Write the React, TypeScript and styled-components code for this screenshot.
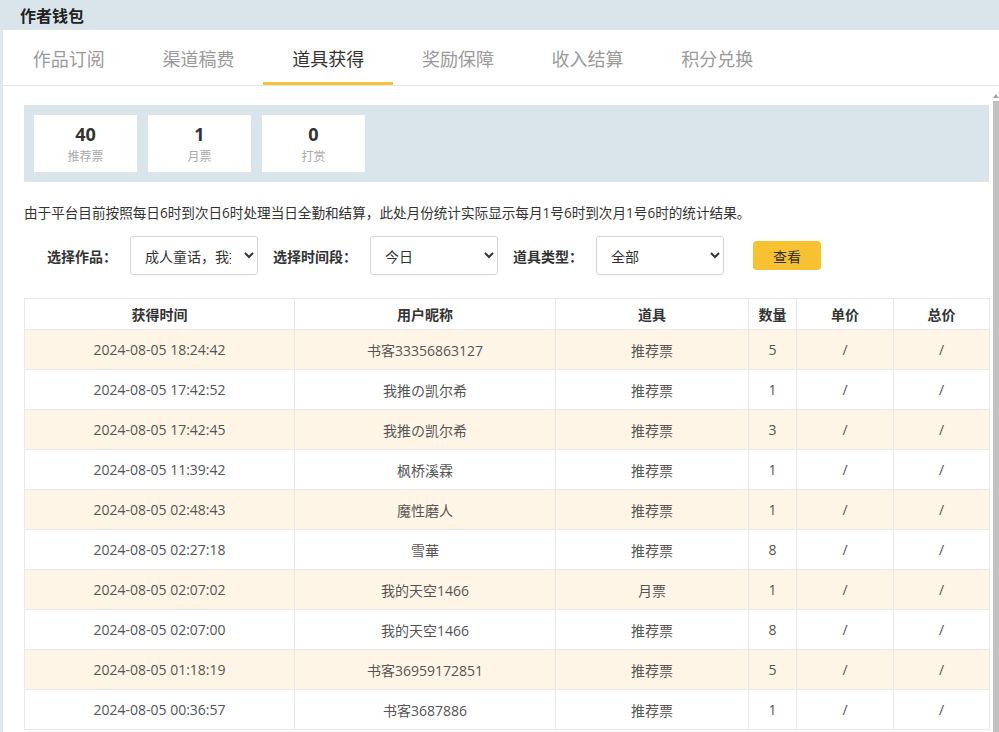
import React from 'react'
import styled, { createGlobalStyle } from 'styled-components'

const GlobalStyle = createGlobalStyle`
  html, body {
    margin: 0;
    padding: 0;
    overflow: hidden;
    background: #fff;
  }
  body {
    font-family: "Open Sans", "Noto Sans CJK SC", sans-serif;
    color: #333;
  }
`

const tabs = ['作品订阅', '渠道稿费', '道具获得', '奖励保障', '收入结算', '积分兑换']

const stats = [
  { value: '40', label: '推荐票' },
  { value: '1', label: '月票' },
  { value: '0', label: '打赏' },
]

const rows = [
  ['2024-08-05 18:24:42', '书客33356863127', '推荐票', '5'],
  ['2024-08-05 17:42:52', '我推の凯尔希', '推荐票', '1'],
  ['2024-08-05 17:42:45', '我推の凯尔希', '推荐票', '3'],
  ['2024-08-05 11:39:42', '枫桥溪霖', '推荐票', '1'],
  ['2024-08-05 02:48:43', '魔性磨人', '推荐票', '1'],
  ['2024-08-05 02:27:18', '雪華', '推荐票', '8'],
  ['2024-08-05 02:07:02', '我的天空1466', '月票', '1'],
  ['2024-08-05 02:07:00', '我的天空1466', '推荐票', '8'],
  ['2024-08-05 01:18:19', '书客36959172851', '推荐票', '5'],
  ['2024-08-05 00:36:57', '书客3687886', '推荐票', '1'],
]

const columns = [
  { title: '获得时间', width: 270 },
  { title: '用户昵称', width: 261 },
  { title: '道具', width: 193 },
  { title: '数量', width: 48 },
  { title: '单价', width: 97 },
  { title: '总价', width: 96 },
]

const App = () => {
  return (
    <>
      <GlobalStyle />
      <Page>
        <TopBar>作者钱包</TopBar>
        <Body>
          <TabBar>
            {tabs.map((t, i) => (
              <Tab key={t} active={i === 2}>{t}</Tab>
            ))}
          </TabBar>
          <Viewport>
            <Content>
              <StatsBox>
                {stats.map(s => (
                  <StatCard key={s.label}>
                    <StatValue>{s.value}</StatValue>
                    <StatLabel>{s.label}</StatLabel>
                  </StatCard>
                ))}
              </StatsBox>
              <Notice>由于平台目前按照每日6时到次日6时处理当日全勤和结算，此处月份统计实际显示每月1号6时到次月1号6时的统计结果。</Notice>
              <FilterRow>
                <FilterLabel first>选择作品：</FilterLabel>
                <Select defaultValue="a">
                  <option value="a">成人童话，我推的凯尔希</option>
                </Select>
                <FilterLabel>选择时间段：</FilterLabel>
                <Select defaultValue="today">
                  <option value="today">今日</option>
                  <option value="month">本月</option>
                </Select>
                <FilterLabel>道具类型：</FilterLabel>
                <Select defaultValue="all">
                  <option value="all">全部</option>
                  <option value="rec">推荐票</option>
                </Select>
                <QueryButton>查看</QueryButton>
              </FilterRow>
              <Table>
                <colgroup>
                  {columns.map(c => (
                    <col key={c.title} style={{ width: c.width }} />
                  ))}
                </colgroup>
                <thead>
                  <tr>
                    {columns.map(c => (
                      <Th key={c.title}>{c.title}</Th>
                    ))}
                  </tr>
                </thead>
                <tbody>
                  {rows.map((r, i) => (
                    <Tr key={i} striped={i % 2 === 0}>
                      <Td>{r[0]}</Td>
                      <Td>{r[1]}</Td>
                      <Td>{r[2]}</Td>
                      <Td>{r[3]}</Td>
                      <Td>/</Td>
                      <Td>/</Td>
                    </Tr>
                  ))}
                </tbody>
              </Table>
            </Content>
            <ScrollBar>
              <ScrollArrow />
              <ScrollThumb />
            </ScrollBar>
          </Viewport>
        </Body>
      </Page>
    </>
  )
}

const Page = styled.div`
  width: 999px;
  height: 732px;
  display: flex;
  flex-direction: column;
  background: #dde7ec;
`

const TopBar = styled.div`
  height: 30px;
  flex-shrink: 0;
  display: flex;
  align-items: center;
  padding-left: 20px;
  font-family: "Noto Sans CJK SC", sans-serif;
  font-size: 16px;
  font-weight: bold;
  color: #222;
  background: #dae5eb;
`

const Body = styled.div`
  flex: 1;
  min-height: 0;
  margin-left: 3px;
  background: #fff;
  display: flex;
  flex-direction: column;
`

const TabBar = styled.div`
  height: 55px;
  flex-shrink: 0;
  display: flex;
  padding-left: 1px;
  border-bottom: 1px solid #e6e6e6;
`

const Tab = styled.div<{ active?: boolean }>`
  width: 129.7px;
  display: flex;
  align-items: center;
  justify-content: center;
  font-family: "Noto Sans CJK SC", sans-serif;
  font-size: 18px;
  color: ${props => (props.active ? '#333' : '#9a9a9a')};
  border-bottom: 3px solid ${props => (props.active ? '#f5c23c' : 'transparent')};
  padding-top: 3px;
  box-sizing: border-box;
`

const Viewport = styled.div`
  flex: 1;
  min-height: 0;
  display: flex;
  overflow: hidden;
`

const Content = styled.div`
  flex: 1;
  min-width: 0;
  padding: 19px 4px 0 21px;
`

const ScrollBar = styled.div`
  width: 6px;
  flex-shrink: 0;
  display: flex;
  flex-direction: column;
  align-items: center;
  padding-top: 8px;
  background: #fff;
`

const ScrollArrow = styled.div`
  width: 0;
  height: 0;
  border-left: 3px solid transparent;
  border-right: 3px solid transparent;
  border-bottom: 4px solid #a3a3a3;
  margin-bottom: 3px;
`

const ScrollThumb = styled.div`
  flex: 1;
  align-self: stretch;
  background: #c2c2c2;
`

const StatsBox = styled.div`
  display: flex;
  gap: 11px;
  padding: 10px;
  background: #d9e5ea;
`

const StatCard = styled.div`
  width: 103px;
  height: 57px;
  box-sizing: border-box;
  padding-top: 8px;
  background: #fff;
  display: flex;
  flex-direction: column;
  align-items: center;
`

const StatValue = styled.div`
  font-size: 18px;
  font-weight: bold;
  line-height: 22px;
  color: #333;
`

const StatLabel = styled.div`
  margin-top: 3px;
  font-family: "Noto Sans CJK SC", sans-serif;
  font-size: 12px;
  line-height: 16px;
  color: #aaa;
`

const Notice = styled.div`
  margin-top: 21px;
  font-size: 13.6px;
  line-height: 20px;
  color: #333;
  white-space: nowrap;
`

const FilterRow = styled.div`
  margin-top: 13px;
  display: flex;
  align-items: center;
  height: 39px;
`

const FilterLabel = styled.span<{ first?: boolean }>`
  margin-left: ${props => (props.first ? '23px' : '15px')};
  margin-right: 13px;
  font-family: "Noto Sans CJK SC", sans-serif;
  font-size: 14px;
  font-weight: bold;
  color: #333;
  white-space: nowrap;
`

const Select = styled.select`
  width: 128px;
  height: 39px;
  padding: 0 10px 0 10px;
  font-family: "Noto Sans CJK SC", sans-serif;
  font-size: 14px;
  color: #333;
  background: #fff;
  border: 1px solid #d6d6d6;
  border-radius: 3px;
  outline: none;
`

const QueryButton = styled.button`
  margin-left: 29px;
  width: 68px;
  height: 29px;
  border: none;
  border-radius: 4px;
  background: #f7c232;
  color: #333;
  font-family: "Noto Sans CJK SC", sans-serif;
  font-size: 14px;
  cursor: pointer;
`

const Table = styled.table`
  margin-top: 23px;
  width: 965px;
  table-layout: fixed;
  border-collapse: collapse;
  border: 1px solid #e6e6e6;
`

const Th = styled.th`
  height: 30px;
  font-family: "Noto Sans CJK SC", sans-serif;
  font-size: 14px;
  font-weight: bold;
  color: #333;
  background: #fff;
  border: 1px solid #e8e8e8;
  padding: 0;
`

const Tr = styled.tr<{ striped?: boolean }>`
  background: ${props => (props.striped ? '#fef5e6' : '#fff')};
`

const Td = styled.td`
  height: 39px;
  font-size: 14px;
  color: #555;
  text-align: center;
  border: 1px solid #e8e8e8;
  padding: 0;
`

export default App
